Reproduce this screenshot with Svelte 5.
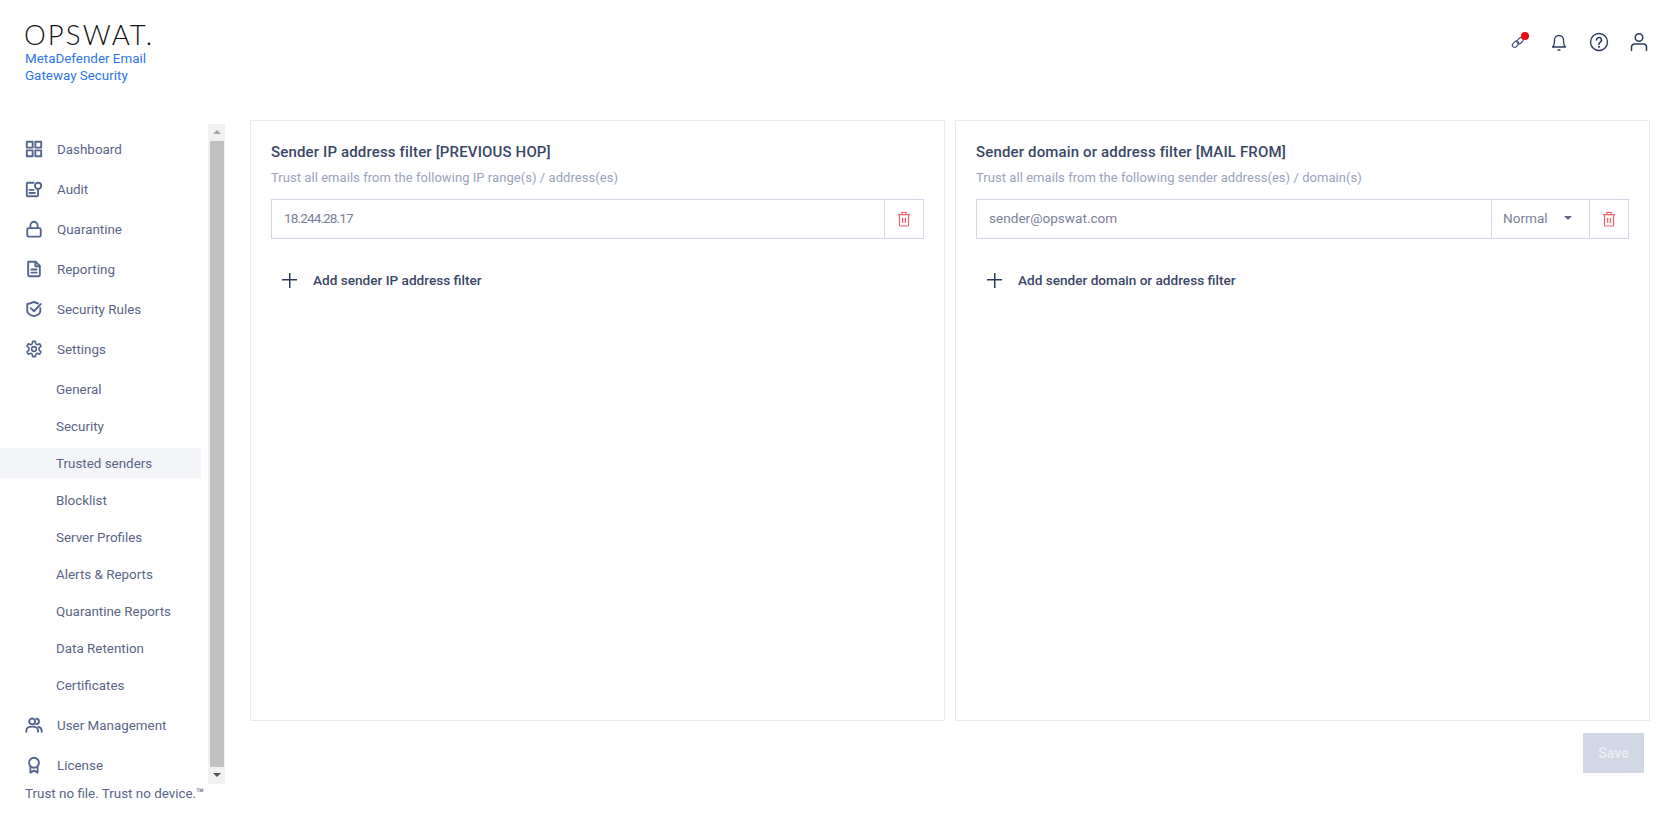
<script>
  const top = [
    { label: 'Dashboard', icon: 'dash' },
    { label: 'Audit', icon: 'audit' },
    { label: 'Quarantine', icon: 'lock' },
    { label: 'Reporting', icon: 'doc' },
    { label: 'Security Rules', icon: 'shield' },
    { label: 'Settings', icon: 'gear' }
  ];
  const subs = ['General', 'Security', 'Trusted senders', 'Blocklist', 'Server Profiles', 'Alerts & Reports', 'Quarantine Reports', 'Data Retention', 'Certificates'];
  const bottom = [
    { label: 'User Management', icon: 'users' },
    { label: 'License', icon: 'award' }
  ];
</script>

{#snippet icon(name)}
  <svg class="nav-icon" viewBox="0 0 20 20" fill="none" stroke="#56658f" stroke-width="2.100" stroke-linecap="round" stroke-linejoin="round">
    {#if name === 'dash'}
      <rect x="2" y="2" width="6.500" height="6.500" /><rect x="11.500" y="2" width="6.500" height="6.500" /><rect x="2" y="11.500" width="6.500" height="6.500" /><rect x="11.500" y="11.500" width="6.500" height="6.500" />
    {:else if name === 'audit'}
      <path d="M9.500 3H3a1 1 0 0 0-1 1v13a1 1 0 0 0 1 1h10.500a1 1 0 0 0 1-1v-3.500" /><circle cx="14.500" cy="6.500" r="3.500" /><path d="M14.500 10v2.500M5 11h4.500M5 14.500h6" />
    {:else if name === 'lock'}
      <rect x="2.500" y="9" width="15" height="9.500" rx="1.500" /><path d="M6 9V6a4 4 0 0 1 8 0v3" />
    {:else if name === 'doc'}
      <path d="M3.500 2h8.500l4.500 4.500V16.500a1.500 1.500 0 0 1-1.500 1.500H5a1.500 1.500 0 0 1-1.500-1.500Z" /><path d="M11.500 2.500V7H16M7 10.500h6M7 14h6" />
    {:else if name === 'shield'}
      <path d="M17 9v3.500c0 2.500-3.500 4.500-7 5.500-3.500-1-7.500-3-7.500-5.500V4.500C5.500 4 8 3 10 2c1.500.8 3 1.400 4.500 1.900" /><path d="M6.500 9 10 12.500l7.500-8" />
    {:else if name === 'gear'}
      <g stroke-width="1.800">
        <circle cx="10" cy="10" r="2.600" /><path d="M8.500 1.500h3l.5 2.800 1.600.9 2.600-1 1.600 2.700-2.100 1.800v2.600l2.100 1.800-1.600 2.700-2.600-1-1.600.9-.5 2.800h-3L8 15.700l-1.600-.9-2.600 1-1.600-2.700 2.100-1.800V8.700L2.200 6.900l1.600-2.700 2.600 1L8 4.300Z" />
      </g>
    {:else if name === 'users'}
      <circle cx="8" cy="6" r="3.300" /><path d="M1.500 17.500V16C1.500 13 4 11.800 8 11.800s6.500 1.200 6.500 4.200v1.500M12.500 3a3 3 0 0 1 0 6M15 12c2.200.5 3.500 1.700 3.500 4v1.500" />
    {:else}
      <circle cx="10" cy="7.500" r="5.500" /><path d="M6 12.500v6l4-2.200 4 2.200v-6" />
    {/if}
  </svg>
{/snippet}

{#snippet trash()}
  <svg class="trash" viewBox="0 0 16 18" fill="none" stroke="#f4646c" stroke-width="1.400" stroke-linejoin="round">
    <path d="M1 4h14M5.500 4V1.500h5V4M2.800 4v12a1 1 0 0 0 1 1h8.400a1 1 0 0 0 1-1V4M6.500 7.500v6M9.500 7.500v6" />
  </svg>
{/snippet}

<div class="page">
  <aside class="sidebar">
    <div class="brand">
      <div class="logo">OPSWAT.</div>
      <div class="product">MetaDefender Email<br />Gateway Security</div>
    </div>
    <div class="nav-wrap">
      <nav class="nav">
        {#each top as item}
          <div class="item">{@render icon(item.icon)}<span>{item.label}</span></div>
        {/each}
        <div class="subs">
          {#each subs as s}
            <div class="sub" class:active={s === 'Trusted senders'}>{s}</div>
          {/each}
        </div>
        {#each bottom as item}
          <div class="item">{@render icon(item.icon)}<span>{item.label}</span></div>
        {/each}
      </nav>
      <div class="scrollbar">
        <span class="arrow up"></span>
        <div class="thumb"></div>
        <span class="arrow down"></span>
      </div>
    </div>
    <div class="tagline">Trust no file. Trust no device.™</div>
  </aside>

  <div class="main">
    <header class="topbar">
      <div class="top-icon key">
        <svg viewBox="0 0 20 20" fill="none" stroke="#4a5a85" stroke-width="1.200" stroke-linecap="round" stroke-linejoin="round">
          <rect x="3" y="10" width="7" height="4.500" rx="2.200" transform="rotate(-45 6.500 12.200)" />
          <rect x="7.500" y="6.500" width="7" height="4.500" rx="2.200" transform="rotate(-45 11 8.700)" />
        </svg>
        <span class="badge"></span>
      </div>
      <div class="top-icon">
        <svg viewBox="0 0 20 20" fill="none" stroke="#2c3a5e" stroke-width="1.300" stroke-linecap="round" stroke-linejoin="round">
          <path d="M3.500 15h13c-1.200-1-1.700-2-1.800-4l-.2-3a4.500 4.500 0 0 0-9 0l-.2 3c-.1 2-.6 3-1.800 4ZM9 18h2" />
        </svg>
      </div>
      <div class="top-icon">
        <svg viewBox="0 0 20 20" fill="none" stroke="#2c3a5e" stroke-width="1.400" stroke-linecap="round">
          <circle cx="10" cy="10" r="8.500" />
          <path d="M7.500 8a2.500 2.500 0 1 1 3.800 2.100c-.9.600-1.300 1-1.300 2.100" stroke-width="1.600" /><path d="M10 14.800v.1" stroke-width="1.900" />
        </svg>
      </div>
      <div class="top-icon">
        <svg viewBox="0 0 20 20" fill="none" stroke="#2c3a5e" stroke-width="1.500" stroke-linecap="round">
          <circle cx="10" cy="5.500" r="3.800" />
          <path d="M2.500 18.500V15a3 3 0 0 1 3-3h9a3 3 0 0 1 3 3v3.500" />
        </svg>
      </div>
    </header>

    <div class="panels">
      <section class="panel">
        <h2>Sender IP address filter [PREVIOUS HOP]</h2>
        <p>Trust all emails from the following IP range(s) / address(es)</p>
        <div class="field">
          <div class="value ip">18.244.28.17</div>
          <div class="del">{@render trash()}</div>
        </div>
        <div class="add"><span class="plus"></span>Add sender IP address filter</div>
      </section>
      <section class="panel">
        <h2>Sender domain or address filter [MAIL FROM]</h2>
        <p>Trust all emails from the following sender address(es) / domain(s)</p>
        <div class="field">
          <div class="value">sender@opswat.com</div>
          <div class="select">Normal<span class="caret"></span></div>
          <div class="del">{@render trash()}</div>
        </div>
        <div class="add"><span class="plus"></span>Add sender domain or address filter</div>
      </section>
    </div>

    <div class="actions"><button class="save" disabled>Save</button></div>
  </div>
</div>

<style>
  :global(body) {
    margin: 0;
    background: #fff;
    font-family: Roboto, "Liberation Sans", sans-serif;
    color: #2c3a5e;
  }
  .page {
    display: flex;
    width: 1668px;
    height: 821px;
    overflow: hidden;
  }
  .sidebar {
    width: 250px;
    flex: none;
    display: flex;
    flex-direction: column;
  }
  .brand {
    padding: 20px 0 0 24px;
    height: 124px;
    box-sizing: border-box;
  }
  .logo {
    font-family: Lato, sans-serif;
    font-weight: 300;
    font-size: 27.500px;
    line-height: 30px;
    letter-spacing: 2.100px;
    color: #111;
    white-space: nowrap;
  }
  .product {
    margin: 0 0 0 1px;
    font-size: 13.400px;
    line-height: 17px;
    color: #2f74f0;
  }
  .nav-wrap {
    display: flex;
    height: 660px;
    width: 225px;
  }
  .nav {
    width: 208px;
    padding-top: 5px;
    overflow: hidden;
  }
  .item {
    height: 40px;
    display: flex;
    align-items: center;
    padding-left: 25px;
    font-size: 13.400px;
    color: #5a6585;
  }
  .nav-icon {
    width: 18px;
    height: 18px;
    margin-right: 14px;
    flex: none;
  }
  .subs {
    display: flex;
    flex-direction: column;
    gap: 7px;
    padding: 5px 0;
  }
  .sub {
    height: 30px;
    display: flex;
    align-items: center;
    padding-left: 56px;
    width: 145px;
    font-size: 13.400px;
    color: #5a6585;
  }
  .active {
    background: #f4f5f9;
  }
  .scrollbar {
    width: 17px;
    background: #f1f1f1;
    display: flex;
    flex-direction: column;
    align-items: center;
    flex: none;
  }
  .thumb {
    flex: 1;
    width: 14px;
    background: #c1c1c1;
  }
  .arrow {
    height: 17px;
    width: 17px;
    position: relative;
    flex: none;
  }
  .arrow::after {
    content: "";
    position: absolute;
    left: 4.500px;
    top: 6px;
    border-left: 4px solid transparent;
    border-right: 4px solid transparent;
  }
  .up::after {
    border-bottom: 4px solid #a3a3a3;
  }
  .down::after {
    border-top: 4px solid #505050;
  }
  .tagline {
    padding: 1px 0 0 25px;
    font-size: 13.400px;
    line-height: 17px;
    color: #5a6585;
    white-space: nowrap;
  }
  .main {
    flex: 1;
    min-width: 0;
    display: flex;
    flex-direction: column;
  }
  .topbar {
    height: 120px;
    flex: none;
    box-sizing: border-box;
    display: flex;
    justify-content: flex-end;
    padding: 32px 19px 0 0;
    gap: 20px;
  }
  .top-icon {
    position: relative;
    width: 20px;
    height: 20px;
  }
  .top-icon svg {
    display: block;
    width: 20px;
    height: 20px;
  }
  .badge {
    position: absolute;
    right: 0;
    top: 0;
    width: 8px;
    height: 8px;
    border-radius: 50%;
    background: #ee0a14;
  }
  .panels {
    display: flex;
    gap: 10px;
    padding-right: 18px;
    height: 601px;
    flex: none;
  }
  .panel {
    flex: 1;
    min-width: 0;
    box-sizing: border-box;
    border: 1px solid #e9ebf3;
    padding: 21px 20px 0;
  }
  h2 {
    margin: 0;
    font-size: 15px;
    line-height: 20px;
    font-weight: 500;
    letter-spacing: 0.150px;
    color: #3a4666;
  }
  p {
    margin: 7px 0 0;
    font-size: 13px;
    line-height: 18px;
    letter-spacing: 0.050px;
    color: #9aa3ba;
  }
  .field {
    margin-top: 12px;
    height: 40px;
    box-sizing: border-box;
    border: 1px solid #d2d6e5;
    display: flex;
    align-items: stretch;
    font-size: 13.600px;
    line-height: 16px;
    color: #7a8299;
  }
  .value {
    flex: 1;
    display: flex;
    align-items: center;
    padding: 0 0 2px 12px;
  }
  .ip {
    letter-spacing: -0.900px;
  }
  .select {
    width: 98px;
    box-sizing: border-box;
    border-left: 1px solid #d2d6e5;
    display: flex;
    align-items: center;
    padding: 0 0 2px 11px;
  }
  .caret {
    margin-left: 16px;
    border-left: 4.500px solid transparent;
    border-right: 4.500px solid transparent;
    border-top: 4.500px solid #5a6785;
  }
  .del {
    width: 38px;
    flex: none;
    border-left: 1px solid #d2d6e5;
    display: flex;
    align-items: center;
    justify-content: center;
  }
  .trash {
    width: 14px;
    height: 16px;
  }
  .add {
    display: flex;
    align-items: center;
    margin-top: 31px;
    height: 20px;
    padding-left: 11px;
    font-size: 13.600px;
    font-weight: 500;
    color: #3a4666;
  }
  .plus {
    width: 15px;
    height: 15px;
    margin-right: 16px;
    background:
      linear-gradient(#2c3a5e, #2c3a5e) center / 100% 1.500px no-repeat,
      linear-gradient(#2c3a5e, #2c3a5e) center / 1.500px 100% no-repeat;
  }
  .actions {
    display: flex;
    justify-content: flex-end;
    padding: 12px 24px 0 0;
  }
  .save {
    width: 61px;
    height: 40px;
    border: 0;
    background: #d2d7e5;
    color: #e9ebf3;
    font: 700 14px Roboto, sans-serif;
  }
</style>
